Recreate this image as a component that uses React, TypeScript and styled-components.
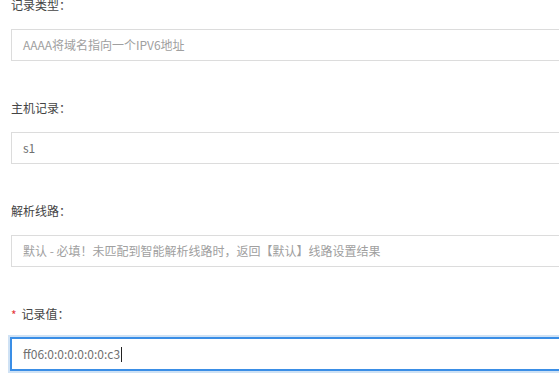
import React from "react";
import styled, { createGlobalStyle } from "styled-components";

const GlobalStyle = createGlobalStyle`
  html, body {
    margin: 0;
    padding: 0;
    background: #fff;
    overflow: hidden;
  }
  body {
    font-family: "Noto Sans CJK SC", "Microsoft YaHei", sans-serif;
    font-size: 12px;
    color: #444;
  }
`;

const Form = styled.div`
  margin-top: -4px;
  padding-left: 11px;
  width: 548px;
  overflow: hidden;
`;

const Field = styled.div`
  margin-bottom: 38px;
`;

const Label = styled.div`
  height: 18px;
  line-height: 18px;
  margin-bottom: 15px;
  color: #444;
  display: flex;
  align-items: center;
`;

const Required = styled.span`
  color: #e4393c;
  font-size: 12px;
  margin-right: 5px;
  line-height: 18px;
  position: relative;
  top: 1px;
`;

const Box = styled.div<{ $focused?: boolean }>`
  box-sizing: border-box;
  width: 620px;
  height: 32px;
  line-height: 30px;
  padding: 0 11px;
  background: #fff;
  border: 1px solid ${(p) => (p.$focused ? "#3a8ee6" : "#dcdcdc")};
  box-shadow: ${(p) =>
    p.$focused ? "0 0 0 1px #3a8ee6, 0 0 0 3px #cfe2f5" : "none"};
  display: flex;
  align-items: center;
`;

const Value = styled.span<{ $muted?: boolean }>`
  color: ${(p) => (p.$muted ? "#a0a0a0" : "#707070")};
  white-space: nowrap;
`;

const Caret = styled.span`
  display: inline-block;
  width: 1px;
  height: 15px;
  background: #222;
  margin-left: 1px;
  vertical-align: middle;
`;

const fields = [
  { label: "记录类型：", value: "AAAA将域名指向一个IPV6地址", muted: true },
  { label: "主机记录：", value: "s1", muted: false },
  {
    label: "解析线路：",
    value: "默认 - 必填！未匹配到智能解析线路时，返回【默认】线路设置结果",
    muted: true,
  },
];

function App() {
  return (
    <>
      <GlobalStyle />
      <Form>
        {fields.map((f) => (
          <Field key={f.label}>
            <Label>{f.label}</Label>
            <Box>
              <Value $muted={f.muted}>{f.value}</Value>
            </Box>
          </Field>
        ))}
        <Field>
          <Label>
            <Required>*</Required>
            记录值：
          </Label>
          <Box $focused>
            <Value>ff06:0:0:0:0:0:0:c3</Value>
            <Caret />
          </Box>
        </Field>
      </Form>
    </>
  );
}

export default App;
